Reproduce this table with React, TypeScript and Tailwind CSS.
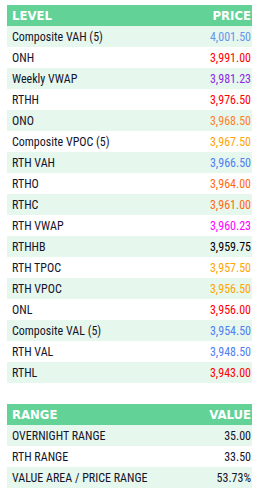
import React from "react";

type Row = { label: string; value: string; color: string };

const levels: Row[] = [
  { label: "Composite VAH (5)", value: "4,001.50", color: "text-[#6495ed]" },
  { label: "ONH", value: "3,991.00", color: "text-[#ff0000]" },
  { label: "Weekly VWAP", value: "3,981.23", color: "text-[#8a2be2]" },
  { label: "RTHH", value: "3,976.50", color: "text-[#ff0000]" },
  { label: "ONO", value: "3,968.50", color: "text-[#ff7f27]" },
  { label: "Composite VPOC (5)", value: "3,967.50", color: "text-[#ffa500]" },
  { label: "RTH VAH", value: "3,966.50", color: "text-[#4f7ff0]" },
  { label: "RTHO", value: "3,964.00", color: "text-[#ff6a10]" },
  { label: "RTHC", value: "3,961.00", color: "text-[#ff6a10]" },
  { label: "RTH VWAP", value: "3,960.23", color: "text-[#ff00ff]" },
  { label: "RTHHB", value: "3,959.75", color: "text-[#000000]" },
  { label: "RTH TPOC", value: "3,957.50", color: "text-[#ffa500]" },
  { label: "RTH VPOC", value: "3,956.50", color: "text-[#ffa500]" },
  { label: "ONL", value: "3,956.00", color: "text-[#ff0000]" },
  { label: "Composite VAL (5)", value: "3,954.50", color: "text-[#4f7ff0]" },
  { label: "RTH VAL", value: "3,948.50", color: "text-[#4f7ff0]" },
  { label: "RTHL", value: "3,943.00", color: "text-[#ff0000]" },
];

const ranges: Row[] = [
  { label: "OVERNIGHT RANGE", value: "35.00", color: "text-[#14142b]" },
  { label: "RTH RANGE", value: "33.50", color: "text-[#14142b]" },
  { label: "VALUE AREA / PRICE RANGE", value: "53.73%", color: "text-[#14142b]" },
];

function Table({ head, value, rows }: { head: string; value: string; rows: Row[] }) {
  return (
    <div className="flex flex-col">
      <div className="flex h-[21px] items-center justify-between bg-[#62d297] pl-[5px] pr-[1px] font-['DejaVu_Sans_Condensed',sans-serif] text-[13px] font-bold text-white">
        <span>{head}</span>
        <span>{value}</span>
      </div>
      {rows.map((r, i) => (
        <div
          key={r.label}
          className={`flex h-[21px] items-center justify-between pl-[5px] pr-[1px] text-[12px] ${
            i % 2 === 0 ? "bg-[#e6f7ee]" : "bg-white"
          }`}
        >
          <span className="text-[#14142b]">{r.label}</span>
          <span className={r.color}>{r.value}</span>
        </div>
      ))}
    </div>
  );
}

export default function App() {
  return (
    <div className="flex h-[496px] w-[260px] flex-col gap-[21px] bg-white pl-[7px] pr-[8px] pt-[5px] font-['Roboto_Condensed','DejaVu_Sans_Condensed',sans-serif]">
      <Table head="LEVEL" value="PRICE" rows={levels} />
      <Table head="RANGE" value="VALUE" rows={ranges} />
    </div>
  );
}
